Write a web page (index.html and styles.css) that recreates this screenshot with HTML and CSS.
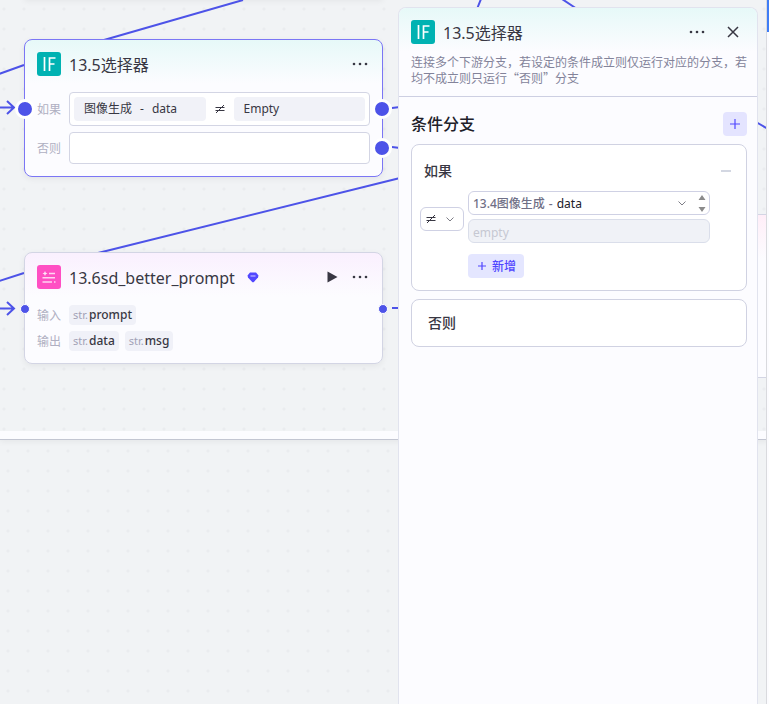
FILE: index.html
```html
<!DOCTYPE html>
<html lang="zh-CN">
<head>
    <meta charset="UTF-8">
    <title>13.5选择器</title>
    <link rel="stylesheet" href="styles.css">
</head>
<body>
    <main class="canvas">
        <div class="loop-area"></div>
        <div class="node-above"></div>

        <svg class="edges" width="769" height="440" fill="none" stroke="#4d53e8" stroke-width="2">
            <path d="M-4 75 L24 65 M104 40 L243 0 M-4 282 L24 273 M98 253 L400 178"/>
            <path d="M0 107.500 H14 M7 101 L14 107.500 L7 114"/>
            <path d="M0 308.500 H14 M7 302 L14 308.500 L7 315"/>
            <path d="M392 108 L400 107 M392 147 L400 148 M392 308 H400"/>
            <path d="M477 9 L481 -1 M562 -1 L577 9 M756 122 L768 129"/>
        </svg>

        <section class="node node-if">
            <header class="node-head">
                <svg class="logo" viewBox="0 0 24 24" fill="none">
                    <rect width="24" height="24" rx="3" fill="#00b2b2"/>
                    <path d="M7.500 5V19M12.500 19V6H18.500M12.500 12H17.500" stroke="#fff" stroke-width="1.700"/>
                </svg>
                <h2>13.5选择器</h2>
                <button class="icon-btn more" aria-label="更多">
                    <svg width="16" height="4" fill="#383743"><circle cx="2" cy="2" r="1.300"/><circle cx="8" cy="2" r="1.300"/><circle cx="14" cy="2" r="1.300"/></svg>
                </button>
            </header>
            <div class="branch">
                <span class="tag">如果</span>
                <div class="cond">
                    <span class="operand"><span>图像生成</span><span>-</span><span>data</span></span>
                    <svg class="neq" width="10" height="10" viewBox="0 0 10 10" stroke="#383743"><path d="M0.500 3.500H9.500M0.500 6.500H9.500M9 1L1 9"/></svg>
                    <span class="operand">Empty</span>
                </div>
            </div>
            <div class="branch">
                <span class="tag">否则</span>
                <div class="cond cond-empty"></div>
            </div>
            <i class="port port-big port-in"></i>
            <i class="port port-big port-true"></i>
            <i class="port port-big port-false"></i>
        </section>

        <section class="node node-prompt">
            <header class="node-head">
                <svg class="logo" viewBox="0 0 24 24" fill="none">
                    <rect width="24" height="24" rx="3" fill="#ff4fc3"/>
                    <path d="M8 6L8.800 7.700L10.500 8.500L8.800 9.300L8 11L7.200 9.300L5.500 8.500L7.200 7.700Z" fill="#ffe6f8"/>
                    <path d="M12 8.500H18M5.500 12.800H18M5.500 17H15M17 17H18.500" stroke="#ffd5f2" stroke-width="1.500"/>
                </svg>
                <h2>13.6sd_better_prompt</h2>
                <svg class="gem" width="12" height="11" viewBox="0 0 12 11"><path d="M3 0.500H9L11.500 3.500L11 5.500L6.600 10.300H5.400L1 5.500L0.500 3.500Z" fill="#5147ff"/><path d="M3.500 4H8.500" stroke="#d5d2ff"/></svg>
                <button class="icon-btn run" aria-label="运行">
                    <svg width="11" height="12" fill="#383743"><path d="M0.500 0.500L10.500 6L0.500 11.500Z"/></svg>
                </button>
                <button class="icon-btn more" aria-label="更多">
                    <svg width="16" height="4" fill="#383743"><circle cx="2" cy="2" r="1.300"/><circle cx="8" cy="2" r="1.300"/><circle cx="14" cy="2" r="1.300"/></svg>
                </button>
            </header>
            <div class="io">
                <span class="tag">输入</span>
                <span class="var"><small>str.</small>prompt</span>
            </div>
            <div class="io">
                <span class="tag">输出</span>
                <span class="var"><small>str.</small>data</span>
                <span class="var"><small>str.</small>msg</span>
            </div>
            <i class="port port-in"></i>
            <i class="port port-out"></i>
        </section>

        <div class="node-next"></div>
        <div class="edge-bar"></div>
    </main>

    <aside class="panel">
        <header class="panel-head">
            <div class="panel-title">
                <svg class="logo" viewBox="0 0 24 24" fill="none">
                    <rect width="24" height="24" rx="3" fill="#00b2b2"/>
                    <path d="M7.500 5V19M12.500 19V6H18.500M12.500 12H17.500" stroke="#fff" stroke-width="1.700"/>
                </svg>
                <h1>13.5选择器</h1>
                <button class="icon-btn more" aria-label="更多">
                    <svg width="16" height="4" fill="#383743"><circle cx="2" cy="2" r="1.300"/><circle cx="8" cy="2" r="1.300"/><circle cx="14" cy="2" r="1.300"/></svg>
                </button>
                <button class="icon-btn close" aria-label="关闭">
                    <svg width="12" height="12" stroke="#383743" stroke-width="1.500"><path d="M1 1L11 11M11 1L1 11"/></svg>
                </button>
            </div>
            <p>连接多个下游分支，若设定的条件成立则仅运行对应的分支，若均不成立则只运行“否则”分支</p>
        </header>

        <div class="panel-body">
            <div class="section-head">
                <h3>条件分支</h3>
                <button class="add-btn" aria-label="添加分支">
                    <svg width="10" height="10" stroke="#5147ff" stroke-width="1.200"><path d="M5 0V10M0 5H10"/></svg>
                </button>
            </div>

            <div class="card">
                <div class="card-head">
                    <h4>如果</h4>
                    <button class="icon-btn" aria-label="删除">
                        <svg width="10" height="2" fill="#d3d7e2"><rect width="10" height="2"/></svg>
                    </button>
                </div>
                <div class="rule">
                    <button class="op" aria-label="不等于">
                        <svg width="10" height="10" viewBox="0 0 10 10" stroke="#383743"><path d="M0.500 3.500H9.500M0.500 6.500H9.500M9 1L1 9"/></svg>
                        <svg width="8" height="5" fill="none" stroke="#7d7d86"><path d="M0.500 0.500L4 4L7.500 0.500"/></svg>
                    </button>
                    <div class="fields">
                        <button class="ref">
                            <span class="ref-node">13.4图像生成</span><span class="ref-node">-</span><span>data</span>
                            <svg class="chev" width="8" height="5" fill="none" stroke="#7d7d86"><path d="M0.500 0.500L4 4L7.500 0.500"/></svg>
                            <svg class="steps" width="8" height="17" fill="#8b8b8b"><path d="M4 0L7.500 5H0.500ZM4 17L7.500 12H0.500Z"/></svg>
                        </button>
                        <input class="value" type="text" placeholder="empty" aria-label="比较值" disabled>
                    </div>
                </div>
                <button class="new-btn">
                    <svg width="8" height="8" stroke="#5147ff" stroke-width="1.200"><path d="M4 0V8M0 4H8"/></svg>
                    新增
                </button>
            </div>

            <div class="card card-else">
                <h4>否则</h4>
            </div>
        </div>
    </aside>
</body>
</html>
```
FILE: styles.css
```css
* { box-sizing: border-box; }
body {
    margin: 0;
    font-family: "Noto Sans", "Noto Sans CJK SC", sans-serif;
    font-size: 12px;
    color: #383743;
}
h1, h2, h3, h4, p { margin: 0; }
h1, h2 { font-size: 16px; line-height: 22px; padding-top: 2px; font-weight: 400; }
button { font: inherit; border: 0; padding: 0; cursor: pointer; }
svg { display: block; flex: none; }
.logo { width: 24px; height: 24px; }
.icon-btn { background: none; display: flex; align-items: center; justify-content: center; }
.more { margin-left: auto; }

/* canvas */
.canvas {
    position: relative;
    min-height: 100vh;
    overflow: hidden;
    background: #f1f3f5 radial-gradient(circle, #eaecef 1px, transparent 2px) -2px 1px / 20px 20px;
}
.edges { position: absolute; top: 0; left: 0; }
.loop-area {
    position: absolute;
    left: 0; right: 0; top: 0;
    height: 440px;
    padding-top: 431px;
    background: #f1f3f5 radial-gradient(circle, #eaecef 1px, transparent 2px) -6px -1px / 20px 20px;
    border-bottom: 1px solid #c3c6d2;
    box-shadow: 0 2px 6px rgba(0,0,0,0.05);
}
.loop-area::after {
    content: "";
    display: block;
    height: 8px;
    background: #fcfcff;
}
.node-above {
    position: absolute;
    left: 24px; top: -20px;
    width: 359px; height: 19px;
    box-shadow: 0 2px 6px rgba(0,0,0,0.06);
}
.node {
    position: absolute;
    left: 24px;
    width: 359px;
    padding: 12px;
    background: #fcfcff;
    border: 1px solid #d3d5e4;
    border-radius: 8px;
    box-shadow: 0 2px 6px rgba(0,0,0,0.06);
}
.node-if { top: 39px; border-color: #7b76f5; background: linear-gradient(#e6f9f8, #fcfcff 44px); }
.node-prompt { top: 252px; background: linear-gradient(#faf0fe, #fcfcff 44px); }
.node-head { display: flex; align-items: center; gap: 8px; padding-right: 2px; }
.node-prompt .node-head { margin-bottom: 16px; }
.gem { margin-left: 4px; }
.run { margin-left: auto; margin-right: 6px; }
.run + .more { margin-left: 0; }
.tag { width: 24px; margin-right: 2px; color: #b0b0c2; flex: none; }

.branch { display: flex; align-items: center; gap: 6px; margin-top: 6px; }
.node-head + .branch { margin-top: 16px; }
.cond {
    flex: 1;
    display: flex;
    align-items: center;
    height: 34px;
    padding: 4px;
    background: #fff;
    border: 1px solid #d3d5e4;
    border-radius: 4px;
}
.cond-empty { height: 32px; }
.operand {
    flex: 1;
    display: flex;
    gap: 8px;
    padding: 0 10px;
    line-height: 24px;
    background: #f1f2f8;
    border-radius: 4px;
}
.neq { margin: 0 9px; }

.io { display: flex; align-items: center; gap: 6px; margin-bottom: 6px; }
.io:last-of-type { margin-bottom: 0; }
.var {
    padding: 0 4px;
    line-height: 20px;
    background: #f0f1f8;
    border-radius: 4px;
    font-weight: 500;
}
.var small { font-size: 11px; font-weight: 400; color: #a2a2b6; margin-right: 1px; }

.port {
    position: absolute;
    width: 10px; height: 10px;
    border: 1px solid #fff;
    border-radius: 50%;
    background: #4d53e8;
}
.port-in { left: -5px; top: 51px; }
.port-out { right: -6px; top: 51px; }
.port-big { width: 20px; height: 20px; border-width: 3px; }
.port-big.port-in { left: -10px; top: 59px; }
.port-true { right: -10px; top: 59px; }
.port-false { right: -10px; top: 98px; }

.node-next {
    position: absolute;
    left: 700px; right: 3px; top: 214px;
    height: 164px;
    background: linear-gradient(#ffeef8, #fcfcff 44px);
    border: solid #d3d5e4;
    border-width: 1px 0;
}
.edge-bar {
    position: absolute;
    right: 0; top: 0; bottom: 0;
    width: 3px;
    background: linear-gradient(#3f7df6 32px, #fcfcff 32px);
    border-left: 1px solid #d9dade;
}

/* settings panel */
.panel {
    position: absolute;
    top: 7px; right: 11px; bottom: 0;
    width: 360px;
    background: #fcfcff;
    border: 1px solid #e1e3ee;
    border-bottom: 0;
    border-radius: 8px 8px 0 0;
    overflow: hidden;
}
.panel-head {
    padding: 12px 10px 10px 12px;
    background: linear-gradient(#e6f9f8, #fcfcff 44px);
    border-bottom: 1px solid #cdcfe2;
}
.panel-title { display: flex; align-items: center; gap: 8px; padding-right: 8px; }
.close { margin-left: 14px; }
.panel-head p {
    margin-top: 10px;
    font-family: "Noto Sans CJK SC", "Noto Sans", sans-serif;
    line-height: 16px;
    color: #83839a;
}
.panel-body { padding: 15px 10px 14px 12px; }
.section-head { display: flex; align-items: center; justify-content: space-between; margin-bottom: 8px; }
h3 { font-size: 16px; line-height: 24px; font-weight: 500; color: #202029; }
.add-btn {
    width: 24px; height: 24px;
    display: flex; align-items: center; justify-content: center;
    background: #e4e4ff;
    border-radius: 4px;
}
.card {
    padding: 16px 12px 12px 8px;
    background: #fff;
    border: 1px solid #d0d2e2;
    border-radius: 8px;
}
h4 { font-size: 14px; line-height: 20px; font-weight: 500; }
.card-head { display: flex; align-items: center; justify-content: space-between; padding: 0 3px 0 4px; }
.rule { display: flex; align-items: center; gap: 4px; margin-top: 10px; padding-right: 24px; }
.op {
    display: flex;
    align-items: center;
    justify-content: space-between;
    width: 44px; height: 24px;
    margin-top: 4px;
    padding: 0 9px 0 5px;
    background: #fff;
    border: 1px solid #cfd1e4;
    border-radius: 6px;
}
.fields { flex: 1; display: flex; flex-direction: column; gap: 4px; }
.ref {
    display: flex;
    align-items: center;
    gap: 4px;
    height: 24px;
    padding: 0 3px 0 4px;
    background: #fff;
    border: 1px solid #cfd1e4;
    border-radius: 6px;
    color: #202029;
}
.ref-node { color: #6f6f86; font-weight: 500; }
.chev { margin-left: auto; }
.steps { margin-left: 8px; }
.value {
    width: 100%; height: 24px;
    padding: 2px 4px 0;
    font: inherit;
    background: #f0f2f7;
    border: 1px solid #dadeea;
    border-radius: 6px;
}
.value::placeholder { color: #c6c8d2; }
.new-btn {
    display: flex;
    align-items: center;
    gap: 6px;
    height: 24px;
    margin: 11px 0 0 48px;
    padding: 0 8px 0 10px;
    background: #e4e6ff;
    border-radius: 4px;
    color: #5147ff;
    font-weight: 500;
}
.card-else { margin-top: 8px; padding: 13px 16px; }
```
